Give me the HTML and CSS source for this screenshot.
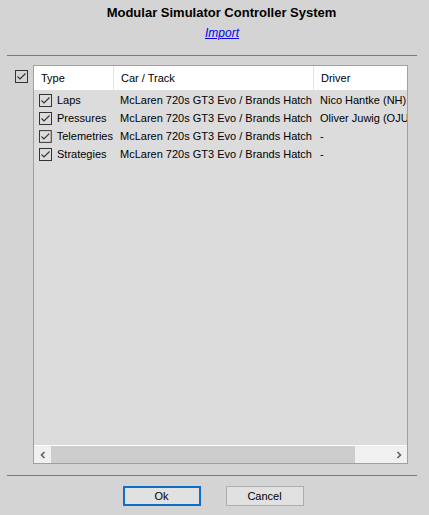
FILE: index.html
```html
<!DOCTYPE html>
<html>
<head>
<meta charset="utf-8">
<link rel="stylesheet" href="styles.css">
</head>
<body>
<div class="dialog">
  <div class="title">Modular Simulator Controller System</div>
  <div class="sub"><a class="import" href="#">Import</a></div>
  <div class="sep top-sep"></div>
  <div class="main">
    <div class="master">
      <svg class="cb" width="13" height="13" viewBox="0 0 13 13"><rect x="0.5" y="0.5" width="12" height="12" fill="none" stroke="#333"/><path d="M2.5 6.5 L5 9 L10.5 3.5" fill="none" stroke="#333" stroke-width="1.2"/></svg>
    </div>
    <div class="list">
      <div class="viewport">
        <div class="head">
          <div class="hc c1">Type</div>
          <div class="hc c2">Car / Track</div>
          <div class="hc c3">Driver</div>
        </div>
        <div class="row">
          <div class="cell c1"><svg class="cb" width="13" height="13" viewBox="0 0 13 13"><rect x="0.5" y="0.5" width="12" height="12" fill="none" stroke="#333"/><path d="M2.5 6.5 L5 9 L10.5 3.5" fill="none" stroke="#333" stroke-width="1.2"/></svg><span>Laps</span></div>
          <div class="cell c2">McLaren 720s GT3 Evo / Brands Hatch</div>
          <div class="cell c3">Nico Hantke (NH)</div>
        </div>
        <div class="row">
          <div class="cell c1"><svg class="cb" width="13" height="13" viewBox="0 0 13 13"><rect x="0.5" y="0.5" width="12" height="12" fill="none" stroke="#333"/><path d="M2.5 6.5 L5 9 L10.5 3.5" fill="none" stroke="#333" stroke-width="1.2"/></svg><span>Pressures</span></div>
          <div class="cell c2">McLaren 720s GT3 Evo / Brands Hatch</div>
          <div class="cell c3">Oliver Juwig (OJU)</div>
        </div>
        <div class="row">
          <div class="cell c1"><svg class="cb" width="13" height="13" viewBox="0 0 13 13"><rect x="0.5" y="0.5" width="12" height="12" fill="none" stroke="#333"/><path d="M2.5 6.5 L5 9 L10.5 3.5" fill="none" stroke="#333" stroke-width="1.2"/></svg><span>Telemetries</span></div>
          <div class="cell c2">McLaren 720s GT3 Evo / Brands Hatch</div>
          <div class="cell c3">-</div>
        </div>
        <div class="row">
          <div class="cell c1"><svg class="cb" width="13" height="13" viewBox="0 0 13 13"><rect x="0.5" y="0.5" width="12" height="12" fill="none" stroke="#333"/><path d="M2.5 6.5 L5 9 L10.5 3.5" fill="none" stroke="#333" stroke-width="1.2"/></svg><span>Strategies</span></div>
          <div class="cell c2">McLaren 720s GT3 Evo / Brands Hatch</div>
          <div class="cell c3">-</div>
        </div>
      </div>
      <div class="hscroll">
        <div class="arrow"><svg width="8" height="8" viewBox="0 0 8 8"><path d="M5.5 1 L2.5 4 L5.5 7" fill="none" stroke="#606060" stroke-width="1.6"/></svg></div>
        <div class="track"><div class="thumb"></div></div>
        <div class="arrow"><svg width="8" height="8" viewBox="0 0 8 8"><path d="M2.5 1 L5.5 4 L2.5 7" fill="none" stroke="#606060" stroke-width="1.6"/></svg></div>
      </div>
    </div>
  </div>
  <div class="sep bottom-sep"></div>
  <div class="buttons">
    <button class="btn default">Ok</button>
    <button class="btn">Cancel</button>
  </div>
</div>
</body>
</html>
```
FILE: styles.css
```css
html, body {
  margin: 0;
  padding: 0;
  background: #d4d4d4;
  width: 429px;
  height: 515px;
  overflow: hidden;
}
.dialog {
  font-family: "Liberation Sans", Arial, sans-serif;
  font-size: 11px;
  color: #000;
}
.title {
  font-weight: bold;
  font-size: 13px;
  line-height: 15px;
  text-align: center;
  padding-top: 5px;
  padding-left: 14px;
}
.sub {
  text-align: center;
  margin-top: 6px;
  line-height: 14px;
  font-size: 12px;
  padding-left: 15px;
}
.import {
  color: #0000ee;
  font-style: italic;
  text-decoration: underline;
}
.sep {
  height: 1px;
  background: #7a7a7a;
  margin-left: 7px;
  width: 410px;
}
.top-sep {
  margin-top: 15px;
}
.main {
  display: flex;
  margin-top: 9px;
  height: 399px;
}
.master {
  width: 33px;
  padding-left: 15px;
  padding-top: 5px;
  box-sizing: border-box;
}
.cb {
  display: block;
}
.list {
  width: 375px;
  height: 399px;
  box-sizing: border-box;
  border: 1px solid #a0a0a0;
  background: #dcdcdc;
  display: flex;
  flex-direction: column;
}
.viewport {
  flex: 1;
  overflow: hidden;
}
.head, .row {
  display: grid;
  grid-template-columns: 79px 200px 100px;
  white-space: nowrap;
}
.head {
  background: #fff;
  height: 24px;
  line-height: 24px;
  margin-bottom: 1px;
}
.hc {
  padding-left: 7px;
  border-left: 1px solid #e5e5e5;
}
.hc.c1 {
  border-left: none;
}
.row {
  height: 18px;
  line-height: 18px;
}
.cell {
  padding-left: 7px;
  overflow: hidden;
}
.cell.c1 {
  display: flex;
  align-items: center;
  padding-left: 5px;
}
.cell.c1 span {
  margin-left: 5px;
}
.cell.c3 {
  padding-left: 7px;
}
.hscroll {
  height: 17px;
  display: flex;
  border-top: 1px solid #fff;
  background: #f0f0f0;
}
.arrow {
  width: 17px;
  display: flex;
  align-items: center;
  justify-content: center;
}
.track {
  flex: 1;
  display: flex;
}
.thumb {
  width: 304px;
  background: #cdcdcd;
}
.bottom-sep {
  margin-top: 11px;
}
.buttons {
  display: flex;
  justify-content: center;
  gap: 25px;
  margin-top: 10px;
  padding-right: 3px;
}
.btn {
  width: 78px;
  height: 20px;
  box-sizing: border-box;
  background: #e1e1e1;
  border: 1px solid #adadad;
  font-family: "Liberation Sans", Arial, sans-serif;
  font-size: 11px;
  color: #000;
  padding: 0;
  margin: 0;
}
.btn.default {
  border: 2px solid #0f6fc6;
}
```
